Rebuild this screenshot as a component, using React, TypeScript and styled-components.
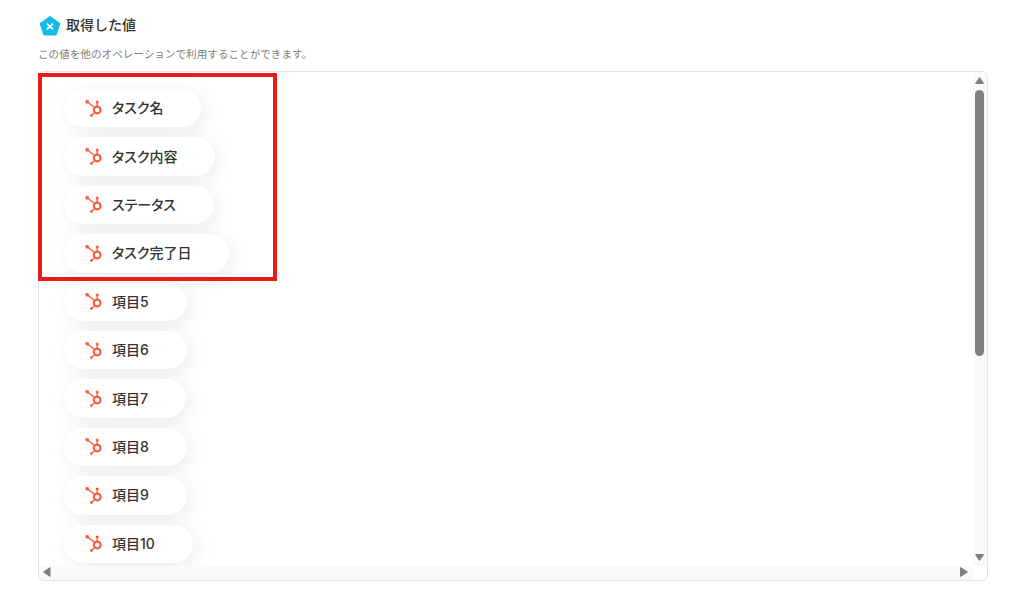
import styled, { createGlobalStyle } from 'styled-components';
import { SiHubspot } from 'react-icons/si';

const items = ['タスク名', 'タスク内容', 'ステータス', 'タスク完了日', '項目5', '項目6', '項目7', '項目8', '項目9', '項目10'];

export default function App() {
  return (
    <Page>
      <GlobalStyle />
      <Title>
        <svg width="22" height="22" viewBox="0 0 22 22">
          <polygon
            points="11,3 20.3,9.8 16.7,20.5 5.3,20.5 1.7,9.8"
            fill="#13bce9"
            stroke="#13bce9"
            strokeWidth="2"
            strokeLinejoin="round"
          />
          <path d="M7.9 9.6 14.1 15.4M14.1 9.6 7.9 15.4" stroke="#fff" strokeWidth="1.7" />
        </svg>
        <TitleText>取得した値</TitleText>
      </Title>
      <Description>この値を他のオペレーションで利用することができます。</Description>
      <ListFrame>
        <List>
          {items.map((item) => (
            <Pill key={item}>
              <SiHubspot size={17} color="#f95f3b" />
              <PillLabel>{item}</PillLabel>
            </Pill>
          ))}
        </List>
        <VerticalBar>
          <Arrow viewBox="0 0 14 16">
            <polygon points="6.5,5.5 10.5,11.5 2.5,11.5" />
          </Arrow>
          <VerticalThumb />
          <Arrow viewBox="0 0 14 16">
            <polygon points="2.5,4.5 10.5,4.5 6.5,10.5" />
          </Arrow>
        </VerticalBar>
        <HorizontalBar>
          <Arrow viewBox="0 0 14 14">
            <polygon points="4.5,6 11,1.5 11,10.5" />
          </Arrow>
          <Arrow viewBox="0 0 14 14">
            <polygon points="1.5,1.5 1.5,10.5 8.5,6" />
          </Arrow>
        </HorizontalBar>
        <Highlight />
      </ListFrame>
    </Page>
  );
}

const GlobalStyle = createGlobalStyle`
  html, body {
    margin: 0;
    background: #fff;
  }
  body {
    font-family: Inter, "Noto Sans CJK JP", "Noto Sans", sans-serif;
  }
`;

const Page = styled.main`
  box-sizing: border-box;
  width: 1031px;
  height: 602px;
  padding: 14px 43px 21px 38px;
  display: flex;
  flex-direction: column;
  overflow: hidden;
`;

const Title = styled.header`
  display: flex;
  align-items: center;
  gap: 5px;
  height: 22px;
  margin-bottom: 10px;

  svg {
    flex: none;
    margin-left: 1px;
  }
`;

const TitleText = styled.h1`
  margin: 0 0 1px;
  font-size: 14px;
  font-weight: 500;
  line-height: 20px;
  color: #333;
`;

const Description = styled.p`
  margin: 0 0 7px;
  font-size: 10.6px;
  line-height: 18px;
  color: #808080;
`;

const ListFrame = styled.section`
  position: relative;
  flex: 1;
  min-height: 0;
  box-sizing: border-box;
  border: 1px solid #e4e4e4;
  border-radius: 6px;
  display: grid;
  grid-template-columns: 1fr 14px;
  grid-template-rows: 1fr 14px;
`;

const List = styled.div`
  min-height: 0;
  padding: 17px 25px 0;
  display: flex;
  flex-direction: column;
  align-items: flex-start;
  gap: 10px;
  overflow: hidden;
`;

const VerticalBar = styled.div`
  background: #fafafa;
  display: flex;
  flex-direction: column;
  border-radius: 0 6px 0 0;
`;

const VerticalThumb = styled.div`
  width: 9px;
  height: 266px;
  margin: 2px 0 auto 2px;
  border-radius: 5px;
  background: #808080;
`;

const HorizontalBar = styled.div`
  background: #fafafa;
  display: flex;
  justify-content: space-between;
  border-radius: 0 0 0 6px;
`;

const Arrow = styled.svg`
  flex: none;
  width: 14px;
  fill: #808080;
  stroke: #808080;
  stroke-linejoin: round;
`;

const Pill = styled.div`
  flex: none;
  box-sizing: border-box;
  height: 38.4px;
  display: inline-flex;
  align-items: center;
  gap: 10px;
  padding: 0 38px 0 21px;
  border-radius: 20px;
  background: #fff;
  box-shadow: 4px 4px 20px rgba(0, 0, 0, 0.08);
`;

const PillLabel = styled.span`
  padding-bottom: 2px;
  font-size: 14px;
  font-weight: 500;
  font-feature-settings: 'palt';
  color: #333;
  white-space: nowrap;
`;

const Highlight = styled.div`
  position: absolute;
  left: -1px;
  top: 1px;
  width: 239px;
  height: 208px;
  box-sizing: border-box;
  border: 4px solid #e91c1c;
  pointer-events: none;
`;
